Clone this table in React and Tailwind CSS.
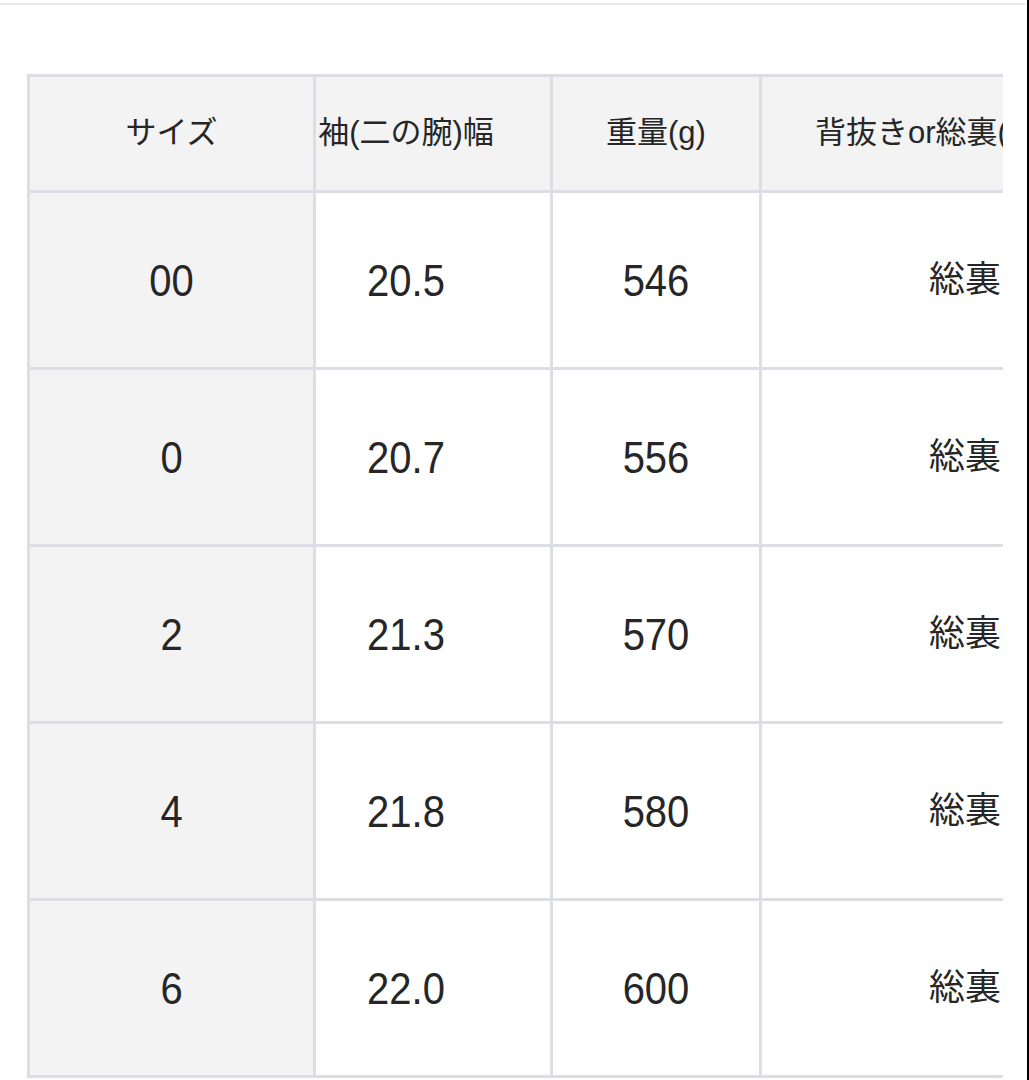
import React from "react";

const rows = [
  ["00", "20.5", "546", "総裏"],
  ["0", "20.7", "556", "総裏"],
  ["2", "21.3", "570", "総裏"],
  ["4", "21.8", "580", "総裏"],
  ["6", "22.0", "600", "総裏"],
];

const font = { fontFamily: '"Liberation Sans", Roboto, "Noto Sans CJK JP", sans-serif' };

function Num({ children }) {
  return <span className="inline-block scale-y-[1.12] text-[40px] leading-none">{children}</span>;
}

export default function App() {
  return (
    <div className="relative w-[1029px] h-[1080px] overflow-hidden bg-white border-r-2 border-black" style={font}>
      <div className="mt-[3px] h-[2px] w-[1025px] bg-[#e9e9ec]" />
      <div className="mt-[69px] ml-[27px] w-[976px] overflow-hidden">
        <div className="grid w-max grid-cols-[283px_234px_206px_414px] auto-rows-[174px] grid-rows-[113px] gap-[3px] p-[3px] bg-[#dcdde5] text-[#262626]">
          <div className="flex items-center justify-center bg-[#f3f3f4] text-[31px]">サイズ</div>
          <div className="flex items-center justify-center pr-[54px] bg-[#f3f3f4] text-[31px] whitespace-nowrap">袖(二の腕)幅</div>
          <div className="flex items-center justify-center bg-[#f3f3f4] text-[31px]">重量(g)</div>
          <div className="flex items-center justify-start pl-[53px] bg-[#f3f3f4] text-[31px] whitespace-nowrap">背抜きor総裏(ジャケ)</div>
          {rows.map((r, i) => (
            <React.Fragment key={i}>
              <div className="flex items-center justify-center bg-[#f3f3f4]"><Num>{r[0]}</Num></div>
              <div className="flex items-center justify-center pr-[54px] bg-white"><Num>{r[1]}</Num></div>
              <div className="flex items-center justify-center bg-white"><Num>{r[2]}</Num></div>
              <div className="flex items-center justify-end pr-[175px] bg-white text-[36px]">{r[3]}</div>
            </React.Fragment>
          ))}
        </div>
      </div>
    </div>
  );
}
